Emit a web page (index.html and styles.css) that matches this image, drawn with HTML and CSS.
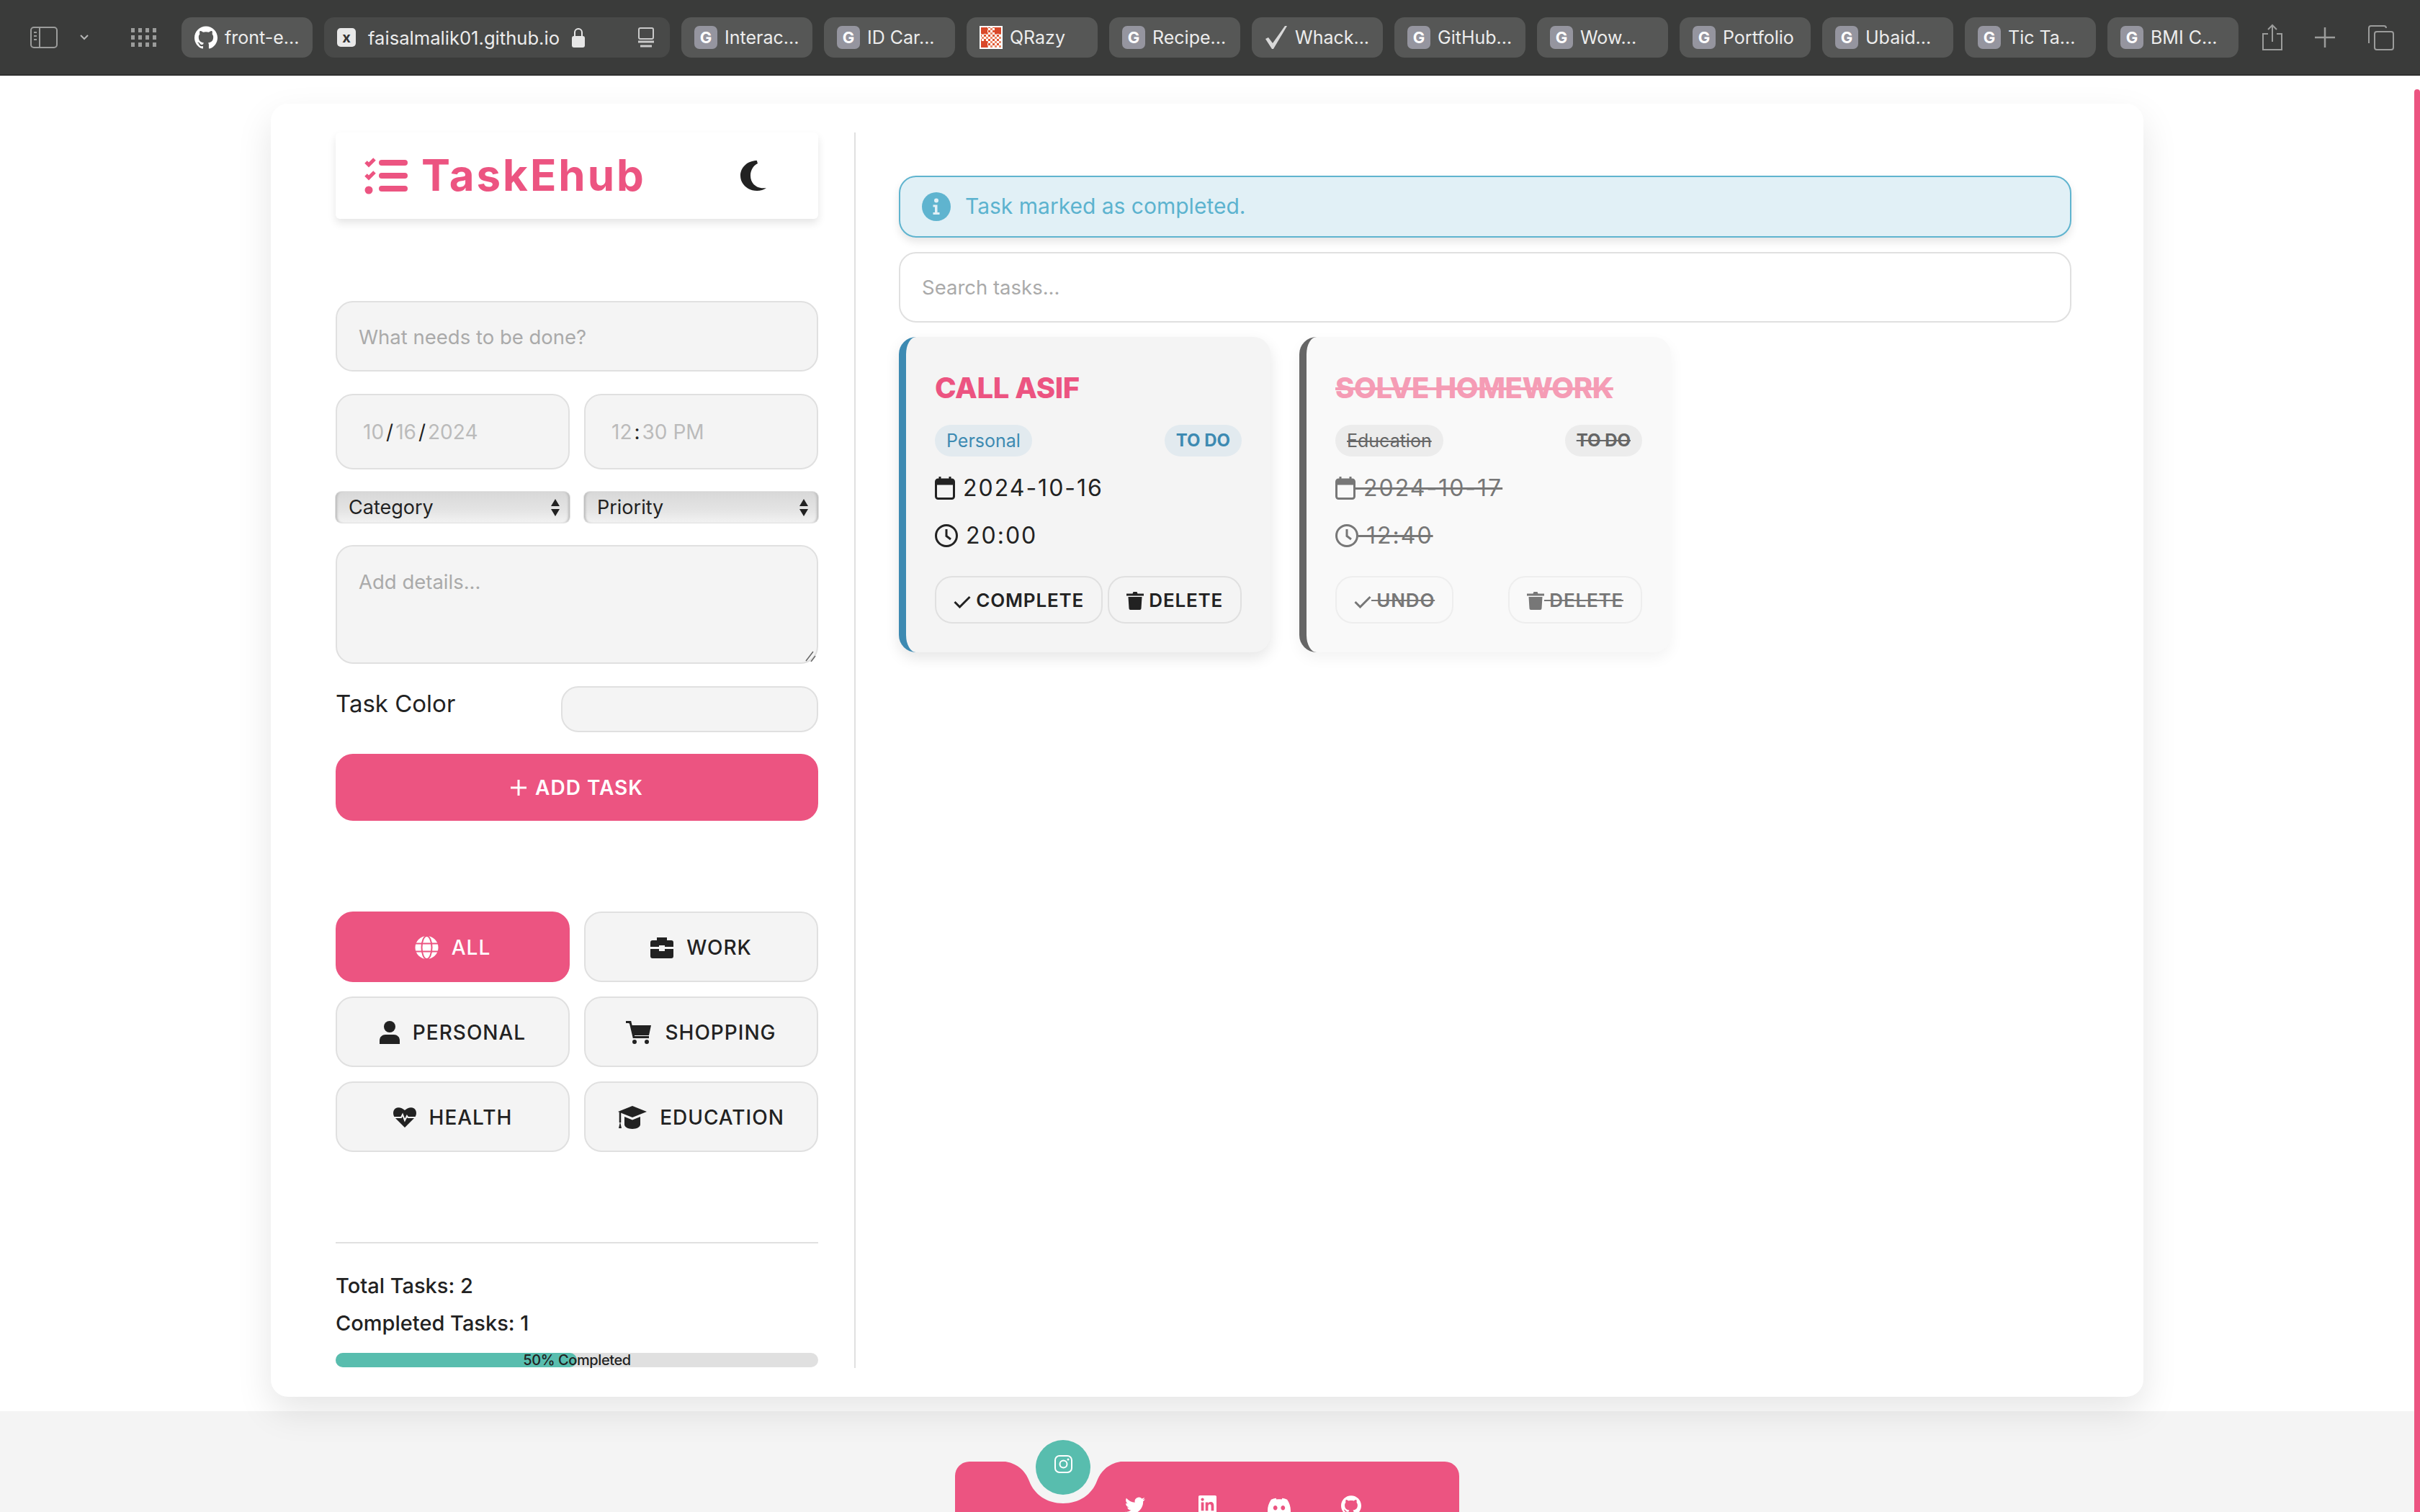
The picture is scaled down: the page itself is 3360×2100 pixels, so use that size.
FILE: index.html
```html
<!DOCTYPE html>
<html lang="en">
<head>
    <meta charset="UTF-8">
    <title>TaskEhub</title>
    <link rel="stylesheet" href="styles.css">
</head>
<body>

<svg class="sprite" width="0" height="0">
    <symbol id="i-github" viewBox="0 0 24 24"><path d="M12 .297c-6.63 0-12 5.373-12 12 0 5.303 3.438 9.8 8.205 11.385.6.113.82-.258.82-.577 0-.285-.01-1.04-.015-2.04-3.338.724-4.042-1.61-4.042-1.61C4.422 18.07 3.633 17.7 3.633 17.7c-1.087-.744.084-.729.084-.729 1.205.084 1.838 1.236 1.838 1.236 1.07 1.835 2.809 1.305 3.495.998.108-.776.417-1.305.76-1.605-2.665-.3-5.466-1.332-5.466-5.93 0-1.31.465-2.38 1.235-3.22-.135-.303-.54-1.523.105-3.176 0 0 1.005-.322 3.3 1.23.96-.267 1.98-.399 3-.405 1.02.006 2.04.138 3 .405 2.28-1.552 3.285-1.23 3.285-1.23.645 1.653.24 2.873.12 3.176.765.84 1.23 1.91 1.23 3.22 0 4.61-2.805 5.625-5.475 5.92.42.36.81 1.096.81 2.22 0 1.606-.015 2.896-.015 3.286 0 .315.21.69.825.57C20.565 22.092 24 17.592 24 12.297c0-6.627-5.373-12-12-12" fill="currentColor"/></symbol>
    <symbol id="i-calendar" viewBox="0 0 28 32"><path d="M7 0v4M21 0v4" stroke="currentColor" stroke-width="3"/><rect x="1.5" y="4" width="25" height="26.5" rx="3" fill="none" stroke="currentColor" stroke-width="3"/><rect x="1.5" y="4" width="25" height="7.5" fill="currentColor"/></symbol>
    <symbol id="i-clock" viewBox="0 0 32 32"><circle cx="16" cy="16" r="14.5" fill="none" stroke="currentColor" stroke-width="3"/><path d="M16 7v9.5l6 4.5" fill="none" stroke="currentColor" stroke-width="3"/></symbol>
    <symbol id="i-check" viewBox="0 0 24 18"><path d="M1.5 9l7 7L22.5 2" fill="none" stroke="currentColor" stroke-width="3"/></symbol>
    <symbol id="i-trash" viewBox="0 0 24 26"><path d="M0 3.5h8.5L9.5 1h5l1 2.500H24V6.500H0z" fill="currentColor"/><path d="M2.500 8h19l-1 16a2 2 0 0 1-2 2h-13a2 2 0 0 1-2-2z" fill="currentColor"/></symbol>
</svg>

<div class="page">

    <header class="toolbar">
        <div class="toolbar-left">
            <svg class="tb-icon" width="38" height="30" viewBox="0 0 38 30"><rect x="1" y="1" width="36" height="28" rx="4" fill="none" stroke="#9b9c9b" stroke-width="2"/><path d="M13 1v28" stroke="#9b9c9b" stroke-width="2"/><path d="M5 8h4M5 13h4M5 18h4" stroke="#9b9c9b" stroke-width="2"/></svg>
            <svg class="tb-chevron" width="12" height="8" viewBox="0 0 12 8"><path d="M1 1l5 5 5-5" fill="none" stroke="#b5b5b5" stroke-width="2"/></svg>
            <svg class="tb-grid" width="36" height="26" viewBox="0 0 36 26">
                <g fill="#9b9c9b">
                    <rect x="0" y="0" width="5" height="6"/><rect x="10" y="0" width="5" height="6"/><rect x="20" y="0" width="5" height="6"/><rect x="30" y="0" width="5" height="6"/>
                    <rect x="0" y="10" width="5" height="6"/><rect x="10" y="10" width="5" height="6"/><rect x="20" y="10" width="5" height="6"/><rect x="30" y="10" width="5" height="6"/>
                    <rect x="0" y="20" width="5" height="6"/><rect x="10" y="20" width="5" height="6"/><rect x="20" y="20" width="5" height="6"/><rect x="30" y="20" width="5" height="6"/>
                </g>
            </svg>
        </div>

        <nav class="tabs">
            <div class="tab"><svg class="fav-gh" width="32" height="32"><use href="#i-github"/></svg>front-e...</div>
            <div class="tab tab-active">
                <span class="fav-x">x</span>
                <span class="tab-url">faisalmalik01.github.io</span>
                <svg class="tab-lock" width="20" height="28" viewBox="0 0 20 28"><path d="M5 13V7a5 5 0 0 1 10 0v6" fill="none" stroke="#e6e6e6" stroke-width="2"/><rect x="1" y="12" width="18" height="16" rx="3" fill="#e6e6e6"/></svg>
                <svg class="tab-reader" width="24" height="28" viewBox="0 0 24 28"><rect x="2" y="1" width="20" height="15" rx="2" fill="none" stroke="#c9c9c9" stroke-width="2"/><path d="M1 20h22" stroke="#c9c9c9" stroke-width="3"/><path d="M4 26h16" stroke="#c9c9c9" stroke-width="3"/></svg>
            </div>
            <div class="tab"><span class="fav-g">G</span>Interac...</div>
            <div class="tab"><span class="fav-g">G</span>ID Car...</div>
            <div class="tab">
                <svg class="fav-qr" width="32" height="32" viewBox="0 0 32 32">
                    <defs><pattern id="qr" width="6" height="6" patternUnits="userSpaceOnUse"><rect x="0" y="0" width="3" height="3" fill="#e0552f"/><rect x="3" y="3" width="3" height="3" fill="#e88a6a"/></pattern></defs>
                    <rect width="32" height="32" fill="#fff"/><rect x="2" y="2" width="28" height="28" fill="url(#qr)"/>
                    <rect x="2" y="2" width="9" height="9" fill="#d9482a"/><rect x="21" y="2" width="9" height="9" fill="#d9482a"/><rect x="2" y="21" width="9" height="9" fill="#d9482a"/>
                </svg>QRazy
            </div>
            <div class="tab"><span class="fav-g">G</span>Recipe...</div>
            <div class="tab"><svg class="fav-check" width="32" height="34" viewBox="0 0 32 34"><path d="M1 19l4-2 6 8L28 1h3L12 33h-2z" fill="#d8d8d8"/></svg>Whack...</div>
            <div class="tab"><span class="fav-g">G</span>GitHub...</div>
            <div class="tab"><span class="fav-g">G</span>Wow...</div>
            <div class="tab"><span class="fav-g">G</span>Portfolio</div>
            <div class="tab"><span class="fav-g">G</span>Ubaid...</div>
            <div class="tab"><span class="fav-g">G</span>Tic Ta...</div>
            <div class="tab"><span class="fav-g">G</span>BMI C...</div>
        </nav>

        <div class="toolbar-right">
            <svg width="30" height="38" viewBox="0 0 30 38"><path d="M9 14H2v22h26V14h-7" fill="none" stroke="#9b9c9b" stroke-width="2"/><path d="M15 25V2M9 8l6-6 6 6" fill="none" stroke="#9b9c9b" stroke-width="2"/></svg>
            <svg width="28" height="28" viewBox="0 0 28 28"><path d="M14 0v28M0 14h28" stroke="#9b9c9b" stroke-width="2.500"/></svg>
            <svg width="38" height="36" viewBox="0 0 38 36"><path d="M3 26V5a3 3 0 0 1 3-3h18a3 3 0 0 1 3 3" fill="none" stroke="#9b9c9b" stroke-width="2"/><rect x="11" y="10" width="26" height="25" rx="3" fill="#3a3b3a" stroke="#9b9c9b" stroke-width="2"/></svg>
        </div>
    </header>

    <main class="content">
        <div class="app">

            <aside class="sidebar">
                <div class="brand">
                    <div class="logo">
                        <svg width="60" height="52" viewBox="0 0 60 52">
                            <path d="M2 7l4 4 8-8M2 25l4 4 8-8" fill="none" stroke="#ec5481" stroke-width="5"/>
                            <circle cx="6" cy="46" r="5.500" fill="#ec5481"/>
                            <path d="M24 8h32M24 26h32M24 44h32" stroke="#ec5481" stroke-width="8" stroke-linecap="round"/>
                        </svg>
                        <span class="logo-text">TaskEhub</span>
                    </div>
                    <svg class="moon" width="36" height="42" viewBox="0 0 36 42"><path d="M23 0C10 0 0 9.500 0 21s10 21 23 21c5 0 9.500-1.500 13-4-12 2-22-5-22-17 0-8 4-14 10-17-.5-2-1-3-1-4z" fill="#222"/></svg>
                </div>

                <input class="field field-title" type="text" placeholder="What needs to be done?">

                <div class="two-col date-row">
                    <div class="field fake-date"><span>10</span><b>/</b><span>16</span><b>/</b><span>2024</span></div>
                    <div class="field fake-date"><span>12</span><b>:</b><span>30 PM</span></div>
                </div>

                <div class="two-col select-row">
                    <div class="native-select">Category
                        <svg width="12" height="24" viewBox="0 0 12 24"><path d="M6 0l6 10H0zM6 24L0 14h12z" fill="#222"/></svg>
                    </div>
                    <div class="native-select">Priority
                        <svg width="12" height="24" viewBox="0 0 12 24"><path d="M6 0l6 10H0zM6 24L0 14h12z" fill="#222"/></svg>
                    </div>
                </div>

                <div class="details-wrap">
                    <textarea class="field field-details" placeholder="Add details..."></textarea>
                    <svg class="grip" width="15" height="15" viewBox="0 0 15 15"><path d="M1 14L11 1M8 15l6-8" fill="none" stroke="#666" stroke-width="1.500"/></svg>
                </div>

                <div class="color-row">
                    <label class="color-label">Task Color</label>
                    <div class="field color-field"></div>
                </div>

                <button class="add-btn">
                    <svg width="22" height="22" viewBox="0 0 22 22"><path d="M11 0v22M0 11h22" stroke="#fff" stroke-width="3"/></svg>
                    ADD TASK
                </button>

                <div class="filters">
                    <button class="filter filter-active">
                        <svg width="33" height="32" viewBox="0 0 33 32"><circle cx="16.500" cy="16" r="16" fill="#fff"/><ellipse cx="16.500" cy="16" rx="7" ry="16" fill="none" stroke="#ec5481" stroke-width="2"/><path d="M0 10.500h33M0 21.500h33" stroke="#ec5481" stroke-width="2"/></svg>
                        ALL
                    </button>
                    <button class="filter">
                        <svg width="32" height="30" viewBox="0 0 32 30"><path d="M11 7V3h10v4" fill="none" stroke="#222" stroke-width="4"/><path d="M3 5h26a3 3 0 0 1 3 3v6H20v-2h-8v2H0V8a3 3 0 0 1 3-3zM0 17h12v3h8v-3h12v10a3 3 0 0 1-3 3H3a3 3 0 0 1-3-3z" fill="#222"/></svg>
                        WORK
                    </button>
                    <button class="filter">
                        <svg width="28" height="32" viewBox="0 0 28 32"><ellipse cx="14" cy="8" rx="8" ry="8" fill="#222"/><path d="M0 32v-5c0-5 4-8 8-8h12c4 0 8 3 8 8v5z" fill="#222"/></svg>
                        PERSONAL
                    </button>
                    <button class="filter">
                        <svg width="36" height="32" viewBox="0 0 36 32"><path d="M0 2h6l1 4h28l-3 14H11L6.500 4" fill="#222"/><path d="M0 1.500h6l5 21h21" fill="none" stroke="#222" stroke-width="3"/><circle cx="12" cy="29" r="3" fill="#222"/><circle cx="29" cy="29" r="3" fill="#222"/></svg>
                        SHOPPING
                    </button>
                    <button class="filter">
                        <svg width="32" height="28" viewBox="0 0 32 28"><path d="M16 28L2 14C-1 10-.5 4 3 1.500 7-1 12 .5 16 4c4-3.500 9-5 13-2.500 3.500 2.500 4 8.500 1 12.500z" fill="#222"/><path d="M0 14h11l2-4 3 8 3-6 1.500 2H32" fill="none" stroke="#f4f4f4" stroke-width="2"/></svg>
                        HEALTH
                    </button>
                    <button class="filter">
                        <svg width="40" height="32" viewBox="0 0 40 32"><path d="M20 0l20 8-20 8L0 8z" fill="#222"/><path d="M9 15l11 4.500L31 15v11c0 3-5 6-11 6s-11-3-11-6z" fill="#222"/><path d="M3 9v14" stroke="#222" stroke-width="2.500"/><path d="M1 31l2-9 2 9z" fill="#222"/></svg>
                        EDUCATION
                    </button>
                </div>

                <div class="stats">
                    <p>Total Tasks: 2</p>
                    <p>Completed Tasks: 1</p>
                    <div class="progress">
                        <div class="progress-fill"></div>
                        <span class="progress-text">50% Completed</span>
                    </div>
                </div>
            </aside>

            <section class="board">
                <div class="alert">
                    <svg width="40" height="40" viewBox="0 0 40 40"><circle cx="20" cy="20" r="20" fill="#5fb4cf"/><circle cx="20" cy="11.500" r="3" fill="#e1f0f6"/><path d="M15.500 17.500h6V28h3v3h-9v-3h2.500v-7.500h-2.500z" fill="#e1f0f6"/></svg>
                    <span>Task marked as completed.</span>
                </div>

                <input class="search" type="text" placeholder="Search tasks...">

                <div class="task-list">
                    <article class="task">
                        <h3 class="task-title">CALL ASIF</h3>
                        <div class="task-tags">
                            <span class="tag">Personal</span>
                            <span class="tag tag-status">TO DO</span>
                        </div>
                        <p class="task-line"><svg class="ic-cal"><use href="#i-calendar"/></svg> 2024-10-16</p>
                        <p class="task-line"><svg class="ic-clock"><use href="#i-clock"/></svg> 20:00</p>
                        <div class="task-actions">
                            <button class="task-btn"><svg class="ic-check"><use href="#i-check"/></svg> COMPLETE</button>
                            <button class="task-btn"><svg class="ic-trash"><use href="#i-trash"/></svg> DELETE</button>
                        </div>
                    </article>

                    <article class="task task-done">
                        <h3 class="task-title">SOLVE HOMEWORK</h3>
                        <div class="task-tags">
                            <span class="tag">Education</span>
                            <span class="tag tag-status">TO DO</span>
                        </div>
                        <p class="task-line"><svg class="ic-cal"><use href="#i-calendar"/></svg> 2024-10-17</p>
                        <p class="task-line"><svg class="ic-clock"><use href="#i-clock"/></svg> 12:40</p>
                        <div class="task-actions">
                            <button class="task-btn"><svg class="ic-check"><use href="#i-check"/></svg> UNDO</button>
                            <button class="task-btn"><svg class="ic-trash"><use href="#i-trash"/></svg> DELETE</button>
                        </div>
                    </article>
                </div>
            </section>

        </div>
    </main>

    <footer class="site-footer">
        <div class="social-bar">
            <svg class="notch" width="160" height="58" viewBox="0 0 160 58"><path d="M0 0C18 3 28 14 33 27 40 46 58 58 80 58S120 46 127 27C132 14 142 3 160 0z" fill="#f4f4f4"/></svg>
            <a class="social social-active">
                <svg width="25" height="25" viewBox="0 0 25 25"><rect x="1" y="1" width="23" height="23" rx="6" fill="none" stroke="#fff" stroke-width="2"/><circle cx="12.500" cy="12.500" r="5" fill="none" stroke="#fff" stroke-width="2"/><circle cx="19" cy="6" r="1.500" fill="#fff"/></svg>
            </a>
            <a class="social"><svg width="28" height="28" viewBox="0 0 24 24"><path d="M23.953 4.57a10 10 0 01-2.825.775 4.958 4.958 0 002.163-2.723c-.951.555-2.005.959-3.127 1.184a4.92 4.92 0 00-8.384 4.482C7.69 8.095 4.067 6.13 1.64 3.162a4.822 4.822 0 00-.666 2.475c0 1.71.87 3.213 2.188 4.096a4.904 4.904 0 01-2.228-.616v.06a4.923 4.923 0 003.946 4.827 4.996 4.996 0 01-2.212.085 4.936 4.936 0 004.604 3.417 9.867 9.867 0 01-6.102 2.105c-.39 0-.779-.023-1.17-.067a13.995 13.995 0 007.557 2.209c9.053 0 13.998-7.496 13.998-13.985 0-.21 0-.42-.015-.63A9.935 9.935 0 0024 4.59z" fill="#fff"/></svg></a>
            <a class="social"><svg width="25" height="25" viewBox="0 0 24 24"><path d="M20.447 20.452h-3.554v-5.569c0-1.328-.027-3.037-1.852-3.037-1.853 0-2.136 1.445-2.136 2.939v5.667H9.351V9h3.414v1.561h.046c.477-.9 1.637-1.85 3.37-1.85 3.601 0 4.267 2.37 4.267 5.455v6.286zM5.337 7.433c-1.144 0-2.063-.926-2.063-2.065 0-1.138.92-2.063 2.063-2.063 1.14 0 2.064.925 2.064 2.063 0 1.139-.925 2.065-2.064 2.065zm1.782 13.019H3.555V9h3.564v11.452zM22.225 0H1.771C.792 0 0 .774 0 1.729v20.542C0 23.227.792 24 1.771 24h20.451C23.2 24 24 23.227 24 22.271V1.729C24 .774 23.2 0 22.222 0h.003z" fill="#fff"/></svg></a>
            <a class="social"><svg width="32" height="32" viewBox="0 0 24 24"><path d="M20.317 4.3698a19.7913 19.7913 0 00-4.8851-1.5152.0741.0741 0 00-.0785.0371c-.211.3753-.4447.8648-.6083 1.2495-1.8447-.2762-3.68-.2762-5.4868 0-.1636-.3933-.4058-.8742-.6177-1.2495a.077.077 0 00-.0785-.037 19.7363 19.7363 0 00-4.8852 1.515.0699.0699 0 00-.0321.0277C.5334 9.0458-.319 13.5799.0992 18.0578a.0824.0824 0 00.0312.0561c2.0528 1.5076 4.0413 2.4228 5.9929 3.0294a.0777.0777 0 00.0842-.0276c.4616-.6304.8731-1.2952 1.226-1.9942a.076.076 0 00-.0416-.1057c-.6528-.2476-1.2743-.5495-1.8722-.8923a.077.077 0 01-.0076-.1277c.1258-.0943.2517-.1923.3718-.2914a.0743.0743 0 01.0776-.0105c3.9278 1.7933 8.18 1.7933 12.0614 0a.0739.0739 0 01.0785.0095c.1202.099.246.1981.3728.2924a.077.077 0 01-.0066.1276 12.2986 12.2986 0 01-1.873.8914.0766.0766 0 00-.0407.1067c.3604.698.7719 1.3628 1.225 1.9932a.076.076 0 00.0842.0286c1.961-.6067 3.9495-1.5219 6.0023-3.0294a.077.077 0 00.0313-.0552c.5004-5.177-.8382-9.6739-3.5485-13.6604a.061.061 0 00-.0312-.0286zM8.02 15.3312c-1.1825 0-2.1569-1.0857-2.1569-2.419 0-1.3332.9555-2.4189 2.157-2.4189 1.2108 0 2.1757 1.0952 2.1568 2.419 0 1.3332-.9555 2.4189-2.1569 2.4189zm7.9748 0c-1.1825 0-2.1569-1.0857-2.1569-2.419 0-1.3332.9554-2.4189 2.1569-2.4189 1.2108 0 2.1757 1.0952 2.1568 2.419 0 1.3332-.946 2.4189-2.1568 2.4189Z" fill="#fff"/></svg></a>
            <a class="social social-gh"><svg width="28" height="28"><use href="#i-github"/></svg></a>
        </div>
    </footer>

    <div class="scroll-thumb"></div>
</div>

</body>
</html>
```

FILE: styles.css
```css
* {
    box-sizing: border-box;
}
html, body {
    margin: 0;
    height: 100%;
    overflow: hidden;
}
body {
    font-family: Inter, "Noto Sans", sans-serif;
    color: #222;
    background-color: #fff;
}
.sprite {
    position: absolute;
}
.page {
    position: relative;
    display: flex;
    flex-direction: column;
    height: 2100px;
}

/* browser toolbar */
.toolbar {
    display: flex;
    align-items: center;
    height: 105px;
    flex: none;
    background-color: #3a3b3a;
    border-bottom: 1px solid #111;
}
.toolbar-left {
    display: flex;
    align-items: center;
    width: 252px;
    padding-left: 42px;
    flex: none;
}
.tb-chevron {
    margin-left: 31px;
}
.tb-grid {
    margin-left: 59px;
}
.tabs {
    display: flex;
    gap: 16px;
}
.tab {
    display: flex;
    align-items: center;
    gap: 10px;
    width: 182px;
    height: 56px;
    padding-left: 18px;
    background-color: #565756;
    border-radius: 14px;
    color: #ececec;
    font-size: 25px;
    white-space: nowrap;
    overflow: hidden;
}
.tab-active {
    width: 480px;
    background-color: #484948;
}
.fav-g {
    display: flex;
    align-items: center;
    justify-content: center;
    width: 32px;
    height: 32px;
    flex: none;
    background-color: #95959f;
    border-radius: 7px;
    color: #fff;
    font-size: 22px;
    font-weight: 700;
}
.fav-x {
    display: flex;
    align-items: center;
    justify-content: center;
    width: 26px;
    height: 26px;
    flex: none;
    background-color: #e8e8e8;
    border-radius: 5px;
    color: #333;
    font-size: 20px;
    font-weight: 700;
}
.fav-gh, .fav-qr, .fav-check {
    flex: none;
    color: #fff;
}
.tab-url {
    margin-left: 7px;
    font-size: 25.6px;
}
.tab-lock {
    margin-left: 6px;
}
.tab-reader {
    margin-left: 62px;
}
.toolbar-right {
    display: flex;
    align-items: center;
    gap: 44px;
    margin-left: 32px;
}

/* main card */
.content {
    height: 1855px;
    flex: none;
    padding-top: 39px;
    display: flex;
    justify-content: center;
    width: 3352px;
}
.app {
    position: relative;
    z-index: 1;
    display: flex;
    width: 2600px;
    height: 1796px;
    padding: 40px 100px 40px 90px;
    background-color: #fff;
    border-radius: 24px;
    box-shadow: 0 20px 50px rgba(0, 0, 0, 0.1);
}

/* left column */
.sidebar {
    display: flex;
    flex-direction: column;
    width: 722px;
    flex: none;
    padding-right: 50px;
    border-right: 2px solid #e0e0e0;
}
.brand {
    display: flex;
    align-items: center;
    justify-content: space-between;
    height: 120px;
    padding: 0 72px 0 40px;
    border-radius: 6px;
    box-shadow: 0 6px 12px rgba(0, 0, 0, 0.1);
}
.logo {
    display: flex;
    align-items: center;
    gap: 19px;
}
.logo-text {
    color: #ec5481;
    font-size: 60px;
    font-weight: 700;
    line-height: 70px;
    letter-spacing: 3px;
    margin-top: -3px;
}
.field {
    width: 100%;
    background-color: #f4f4f4;
    border: 2px solid #e0e0e0;
    border-radius: 24px;
    font-family: Inter, sans-serif;
    font-size: 27.5px;
    color: #222;
    outline: none;
}
.field::placeholder, .search::placeholder {
    color: #aaa;
    opacity: 1;
}
.field-title {
    height: 98px;
    margin-top: 114px;
    padding: 2px 30px 0;
}
.two-col {
    display: grid;
    grid-template-columns: 1fr 1fr;
    gap: 20px;
}
.date-row {
    margin-top: 31px;
}
.fake-date {
    display: flex;
    align-items: center;
    height: 105px;
    padding-left: 36px;
    color: #bbb;
    font-size: 28px;
}
.fake-date b {
    margin: 0 3px;
    color: #222;
    font-weight: 400;
}
.select-row {
    margin-top: 31px;
}
.native-select {
    display: flex;
    align-items: center;
    justify-content: space-between;
    height: 43px;
    padding: 0 14px 0 18px;
    border-radius: 8px;
    background: linear-gradient(#d8d8d8, #e4e4e4 60%, #f2f2f2);
    box-shadow: inset 4px 0 3px -2px #bbb, inset -4px 0 3px -2px #bbb, 0 0 0 1px #e2e2e2;
    font-size: 27px;
}
.details-wrap {
    position: relative;
    margin-top: 31px;
}
.field-details {
    display: block;
    height: 165px;
    padding: 32px 30px;
    resize: none;
}
.grip {
    position: absolute;
    right: 3px;
    bottom: 3px;
}
.color-row {
    display: flex;
    justify-content: space-between;
    margin-top: 31px;
}
.color-label {
    font-size: 33px;
    line-height: 48px;
}
.color-field {
    width: 357px;
    height: 64px;
}
.add-btn {
    display: flex;
    align-items: center;
    justify-content: center;
    gap: 12px;
    height: 93px;
    margin-top: 30px;
    background-color: #ec5481;
    border: none;
    border-radius: 24px;
    color: #fff;
    font-family: Inter, sans-serif;
    font-size: 28px;
    font-weight: 600;
    letter-spacing: 1px;
}
.filters {
    display: grid;
    grid-template-columns: 1fr 1fr;
    grid-auto-rows: 98px;
    gap: 20px;
    margin-top: 126px;
}
.filter {
    display: flex;
    align-items: center;
    justify-content: center;
    gap: 18px;
    padding-top: 2px;
    background-color: #f4f4f4;
    border: 2px solid #e0e0e0;
    border-radius: 24px;
    color: #222;
    font-family: Inter, sans-serif;
    font-size: 28px;
    font-weight: 500;
    letter-spacing: 1px;
}
.filter-active {
    background-color: #ec5481;
    border-color: #ec5481;
    color: #fff;
}
.stats {
    margin-top: 125px;
    padding-top: 39px;
    border-top: 2px solid #e0e0e0;
}
.stats p {
    margin: 0 0 12px;
    font-size: 29px;
    font-weight: 500;
    line-height: 40px;
}
.progress {
    position: relative;
    display: flex;
    justify-content: center;
    height: 20px;
    margin-top: 21px;
    background-color: #e0e0e0;
    border-radius: 10px;
}
.progress-fill {
    position: absolute;
    left: 0;
    top: 0;
    width: 50%;
    height: 100%;
    background-color: #58bdae;
    border-radius: 10px;
}
.progress-text {
    position: relative;
    font-size: 20px;
    font-weight: 500;
    line-height: 20px;
    letter-spacing: -0.4px;
}

/* right column */
.board {
    flex: 1;
    margin-left: 60px;
    display: flex;
    flex-direction: column;
}
.alert {
    display: flex;
    align-items: center;
    gap: 20px;
    height: 86px;
    margin-top: 60px;
    padding-left: 30px;
    background-color: #e1f0f6;
    border: 2px solid #5fb4cf;
    border-radius: 24px;
    box-shadow: 0 6px 12px rgba(0, 0, 0, 0.1);
    color: #5cb3cf;
    font-size: 30px;
}
.alert span {
    margin-top: -2px;
}
.search {
    height: 98px;
    margin-top: 20px;
    padding: 0 30px;
    background-color: #fff;
    border: 2px solid #e0e0e0;
    border-radius: 24px;
    font-family: Inter, sans-serif;
    font-size: 27.5px;
    outline: none;
}
.task-list {
    display: flex;
    gap: 40px;
    margin-top: 20px;
}
.task {
    width: 516px;
    height: 438px;
    padding: 46px 40px 40px;
    background-color: #f4f4f4;
    border-left: 10px solid #3d8ab2;
    border-radius: 24px;
    box-shadow: 0 8px 20px rgba(0, 0, 0, 0.1);
}
.task-title {
    margin: 0;
    color: #ec5481;
    font-size: 40px;
    font-weight: 800;
    line-height: 50px;
    letter-spacing: -0.4px;
    white-space: nowrap;
}
.task-tags {
    display: flex;
    justify-content: space-between;
    margin-top: 26px;
}
.tag {
    height: 44px;
    padding: 0 16px;
    background-color: #e2eaef;
    border-radius: 22px;
    color: #3d8ab2;
    font-size: 25px;
    line-height: 44px;
}
.tag-status {
    font-size: 24px;
    font-weight: 700;
}
.task-line {
    margin: 22px 0 0;
    font-size: 32px;
    line-height: 44px;
    letter-spacing: 2px;
    white-space: nowrap;
}
.ic-cal {
    width: 28px;
    height: 32px;
    vertical-align: -5px;
}
.ic-clock {
    width: 32px;
    height: 32px;
    vertical-align: -5px;
}
.task-actions {
    display: flex;
    justify-content: space-between;
    margin-top: 34px;
}
.task-btn {
    height: 66px;
    padding: 0 24px;
    background-color: transparent;
    border: 2px solid #e0e0e0;
    border-radius: 24px;
    color: #222;
    font-family: Inter, sans-serif;
    font-size: 26px;
    font-weight: 600;
    letter-spacing: 0.8px;
    white-space: nowrap;
}
.ic-check {
    width: 24px;
    height: 18px;
    vertical-align: -2px;
}
.ic-trash {
    width: 24px;
    height: 26px;
    vertical-align: -4px;
}
.task-done {
    background-color: #f9f9f9;
    border-left-color: #666;
    box-shadow: 0 8px 20px rgba(0, 0, 0, 0.05);
}
.task-done .task-title {
    color: #f59cb5;
    text-decoration: line-through;
}
.task-done .tag {
    background-color: #ececec;
    color: #666;
    text-decoration: line-through;
}
.task-done .task-line {
    color: #777;
    text-decoration: line-through;
}
.task-done .task-btn {
    border-color: #eee;
    color: #777;
    text-decoration: line-through;
}

/* footer */
.site-footer {
    flex: 1;
    display: flex;
    justify-content: center;
    width: 3352px;
    padding-top: 70px;
    background-color: #f4f4f4;
    overflow: hidden;
}
.social-bar {
    position: relative;
    display: flex;
    width: 700px;
    height: 100px;
    padding: 0 100px;
    background-color: #ec5481;
    border-radius: 20px 20px 0 0;
}
.notch {
    position: absolute;
    left: 70px;
    top: 0;
}
.social {
    position: relative;
    display: flex;
    justify-content: center;
    align-items: flex-start;
    width: 100px;
    padding-top: 47px;
}
.social-gh {
    color: #fff;
}
.social-active {
    padding-top: 0;
}
.social-active::before {
    content: "";
    position: absolute;
    left: 12px;
    top: -30px;
    width: 76px;
    height: 76px;
    background-color: #58bdae;
    border-radius: 50%;
}
.social-active svg {
    position: absolute;
    top: -9px;
}
.scroll-thumb {
    position: absolute;
    top: 124px;
    right: 0;
    bottom: 0;
    width: 8px;
    background-color: #ec5481;
    border-radius: 4px 4px 0 0;
}
```
